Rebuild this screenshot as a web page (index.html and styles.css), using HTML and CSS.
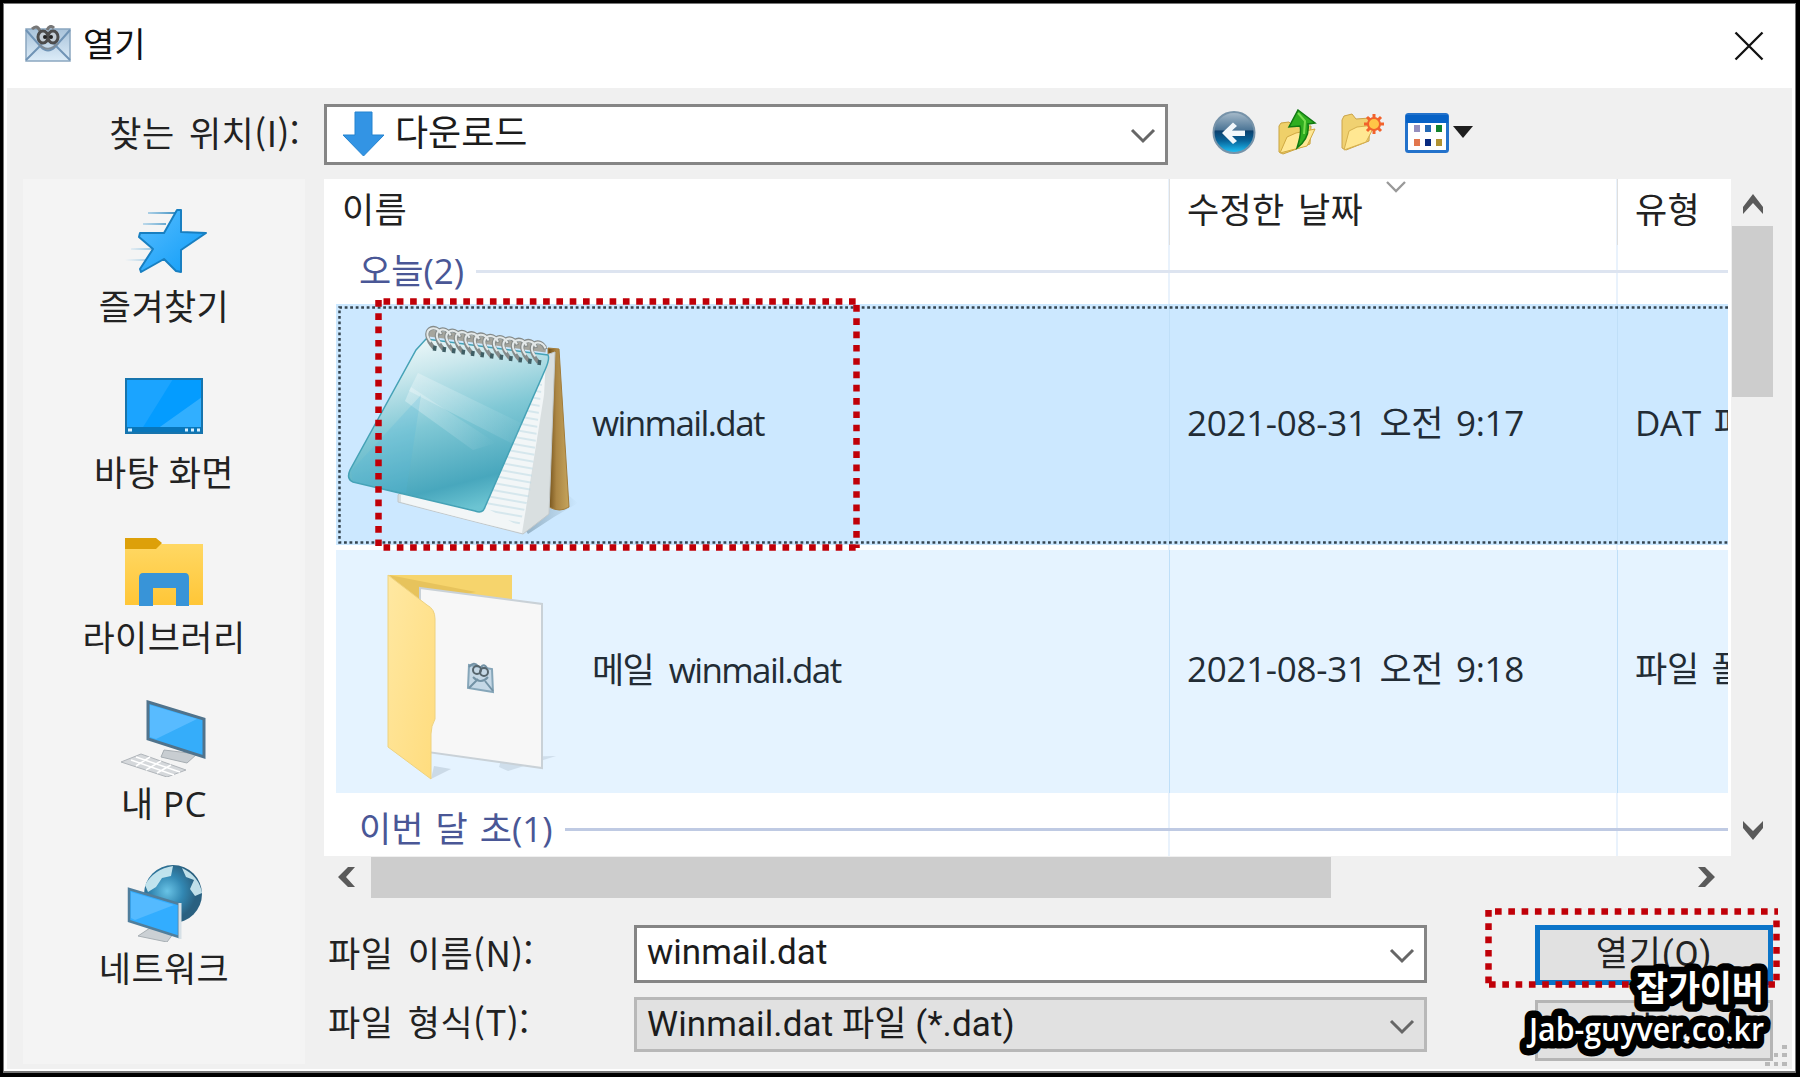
FILE: index.html
```html
<!DOCTYPE html>
<html lang="ko">
<head>
    <meta charset="UTF-8">
    <meta name="viewport" content="width=device-width, initial-scale=1.0">
    <title>열기</title>
    <link rel="stylesheet" href="styles.css">
</head>
<body>
    <div class="dialog">
        <header class="titlebar">
            <svg class="app-icon" width="46" height="38" viewBox="0 0 46 38">
                <defs>
                    <linearGradient id="mail" x1="0" y1="0" x2="0" y2="1">
                        <stop offset="0" stop-color="#a9c3da"/>
                        <stop offset="1" stop-color="#dcecf8"/>
                    </linearGradient>
                </defs>
                <rect x="1" y="4" width="44" height="32" fill="url(#mail)" stroke="#8ba7c0" stroke-width="1.5"/>
                <path d="M1 35 17 19M45 35 29 19M1 5 16 22Q23 29 30 22L45 5" fill="none" stroke="#6f93b5" stroke-width="2"/>
                <path d="M7 4Q12-1 15 6M22 5Q25-1 29 3" fill="none" stroke="#777" stroke-width="3"/>
                <ellipse cx="18" cy="12" rx="5" ry="6" fill="#c3cdd5" stroke="#4c4c4c" stroke-width="3"/>
                <ellipse cx="28" cy="12" rx="5" ry="6" fill="#c3cdd5" stroke="#4c4c4c" stroke-width="3"/>
                <circle cx="20" cy="12" r="2" fill="#222"/><circle cx="26" cy="12" r="2" fill="#222"/>
                <path d="M14 19Q23 29 33 18" fill="none" stroke="#7e8c98" stroke-width="2"/>
            </svg>
            <h1>열기</h1>
            <svg class="close" width="30" height="30" viewBox="0 0 30 30"><path d="M1.500 1.500 28.500 28.500M28.500 1.500 1.500 28.500" stroke="#111" stroke-width="2.300"/></svg>
        </header>

        <div class="content">
            <!-- 위치 선택 -->
            <div class="location">
                <label>찾는 위치(I):</label>
                <div class="combo combo-location">
                    <svg width="43" height="46" viewBox="0 0 43 46"><path d="M13 1H30V24H42L21.500 45 1 24H13Z" fill="#3394e4" stroke="#2583cf"/></svg>
                    <span>다운로드</span>
                    <svg class="chevron" width="26" height="16" viewBox="0 0 26 16"><path d="M2 2 13 13 24 2" fill="none" stroke="#666" stroke-width="3"/></svg>
                </div>
                <div class="tools">
                    <svg class="tool-back" width="44" height="45" viewBox="0 0 44 45">
                        <defs>
                            <linearGradient id="back" x1="0" y1="0" x2="0" y2="1">
                                <stop offset="0" stop-color="#a9bccb"/><stop offset=".44" stop-color="#4c7596"/>
                                <stop offset=".46" stop-color="#0b3f6c"/><stop offset=".7" stop-color="#08649a"/><stop offset="1" stop-color="#20c5fa"/>
                            </linearGradient>
                        </defs>
                        <circle cx="22" cy="22.500" r="20.500" fill="url(#back)" stroke="#7793a9" stroke-width="2"/>
                        <path d="M10 23 21 12.500 25 16 20 20.500H33V26H20L25 31 21 34Z" fill="#f2f7fb"/>
                    </svg>
                    <svg class="tool-up" width="40" height="47" viewBox="0 0 40 47">
                        <path d="M2 17 4 14 12 13 16 17 34 17 33 35 6 45 2 43Z" fill="#efd069" stroke="#c9a340"/>
                        <path d="M3 44 10 28 19 24 38 20 30 37Z" fill="#ffe896" stroke="#d0a942"/>
                        <path d="M21 1 38 14 31 15Q33 29 20 39Q25 23 23 17L12 18Z" fill="#2fae20" stroke="#117a12" stroke-width="1.500"/>
                        <path d="M21 4 28 12 27 25" fill="none" stroke="#79dc50" stroke-width="2"/>
                    </svg>
                    <svg class="tool-new" width="44" height="40" viewBox="0 0 44 40">
                        <path d="M2 7 4 3 12 1 16 6 30 5 29 28 6 37 2 35Z" fill="#f0d171" stroke="#cba44a"/>
                        <path d="M4 37 9 18 17 14 35 12 26 29Z" fill="#ffe792" stroke="#d6b04e"/>
                        <path d="M34 1V21M24 11H44M27 4 41 18M41 4 27 18" stroke="#f2622b" stroke-width="3"/>
                        <circle cx="34" cy="11" r="6" fill="#ffc547" stroke="#f2622b" stroke-width="2"/>
                    </svg>
                    <svg class="tool-views" width="44" height="40" viewBox="0 0 44 40">
                        <rect x="1.500" y="1.500" width="41" height="37" rx="2" fill="#fff" stroke="#2372cb" stroke-width="3"/>
                        <path d="M1 2H43V10H1Z" fill="#0762c6"/>
                        <path d="M9 12h6v7H9Z" fill="#958fbe"/><path d="M20 12h6v7h-6Z" fill="#2469b5"/><path d="M31 12h6v7h-6Z" fill="#12822e"/>
                        <path d="M9 26h6v7H9Z" fill="#e2764d"/><path d="M20 26h6v7h-6Z" fill="#092a80"/><path d="M31 26h6v7h-6Z" fill="#b09232"/>
                    </svg>
                    <svg class="caret" width="20" height="12" viewBox="0 0 20 12"><path d="M0 0H20L10 12Z" fill="#1e1e1e"/></svg>
                </div>
            </div>

            <div class="main">
                <!-- 바로 가기 목록 -->
                <nav class="places">
                    <div class="place">
                        <svg width="88" height="80" viewBox="0 0 88 80">
                            <defs>
                                <linearGradient id="star" x1="0" y1="0" x2="1" y2="1"><stop offset="0" stop-color="#58bdff"/><stop offset="1" stop-color="#0d9cf7"/></linearGradient>
                                <linearGradient id="speed"><stop offset="0" stop-color="#69b5e3" stop-opacity="0"/><stop offset="1" stop-color="#4593c3"/></linearGradient>
                            </defs>
                            <path d="M28 12H55V14H28ZM23 23H46V25H23ZM11 48H34V50H11ZM5 59H28V61H5Z" fill="url(#speed)"/>
                            <path d="M61 10V32L86 33 61 50V72L56 71 44 59 21 72 20 69 33 49 19 37 20 33H44L57 10Z" fill="url(#star)" stroke="#187fc1" stroke-width="2" stroke-linejoin="round"/>
                        </svg>
                        <span>즐겨찾기</span>
                    </div>
                    <div class="place">
                        <svg width="88" height="80" viewBox="0 0 88 80">
                            <path d="M6 13H82V66H6Z" fill="#1ba4ff"/>
                            <path d="M53 13H82V66H20Z" fill="#049cff"/><path d="M82 31V63H37Z" fill="#31afff"/>
                            <path d="M6 61H82V67H6Z" fill="#0876ba"/>
                            <rect x="6" y="13" width="76" height="54" fill="none" stroke="#1674ad" stroke-width="2"/>
                            <path d="M8 64H12M65 64H68M71 64H74M77 64H80" stroke="#d7f0ff" stroke-width="3"/>
                        </svg>
                        <span>바탕 화면</span>
                    </div>
                    <div class="place">
                        <svg width="88" height="80" viewBox="0 -4 88 80">
                            <defs><linearGradient id="lib" x1="0" y1="0" x2="0" y2="1"><stop offset="0" stop-color="#ffd864"/><stop offset="1" stop-color="#ffc637"/></linearGradient></defs>
                            <path d="M5 8H83V70H5Z" fill="url(#lib)"/>
                            <path d="M35 6H83V9H35Z" fill="#f4f4f4"/>
                            <path d="M5 3H36L42 8 36 14H5Z" fill="#dda009"/>
                            <path d="M19 71V43Q19 38 23 38H65Q69 38 69 43V71H56V53H33V71Z" fill="#3894d8"/>
                        </svg>
                        <span>라이브러리</span>
                    </div>
                    <div class="place">
                        <svg width="88" height="80" viewBox="0 0 88 80">
                            <path d="M44 53 77 57 67 66 41 60Z" fill="#c8cdd1" stroke="#a6adb2"/>
                            <path d="M21 57 66 73 47 80 1 65Z" fill="#d5d8db" stroke="#b0b5ba"/>
                            <path d="M16 60 60 75M11 63 54 78M30 60 16 69M41 64 26 73M51 68 37 76" stroke="#fff" stroke-width="1.500"/>
                            <path d="M28 5 84 22V60L28 42Z" fill="#35adfa" stroke="#50738c" stroke-width="3"/>
                            <path d="M30 8 77 22 36 42 30 40Z" fill="#58bbff"/>
                        </svg>
                        <span>내 PC</span>
                    </div>
                    <div class="place">
                        <svg width="88" height="80" viewBox="0 -3 88 80">
                            <defs><radialGradient id="globe" cx=".4" cy=".45"><stop offset="0" stop-color="#69c3e6"/><stop offset=".55" stop-color="#3287b2"/><stop offset="1" stop-color="#296080"/></radialGradient></defs>
                            <circle cx="53" cy="29" r="29" fill="url(#globe)"/>
                            <path d="M25 20Q34 4 53 1L51 11 42 13 36 22 28 27ZM62 3Q79 11 82 28L75 31 70 24 74 15 66 12Z" fill="#d0edf4" opacity=".9"/>
                            <path d="M30 63 53 69 47 77 18 71Z" fill="#cbd0d4" stroke="#a8afb4"/>
                            <path d="M9 24 59 39V72L9 56Z" fill="#32adff" stroke="#507e9c" stroke-width="2.500"/>
                            <path d="M11 27 54 40 15 55 11 53Z" fill="#54baff"/>
                            <path d="M60 38V74" stroke="#d6e0e6" stroke-width="3"/>
                        </svg>
                        <span>네트워크</span>
                    </div>
                </nav>

                <div class="browser">
                    <div class="list-wrap">
                        <!-- 파일 목록 -->
                        <div class="list">
                            <div class="row head">
                                <div class="cell">이름</div>
                                <div class="cell">수정한 날짜
                                    <svg class="sort" width="20" height="12" viewBox="0 0 20 12"><path d="M1 1 10 10 19 1" fill="none" stroke="#999" stroke-width="2.300"/></svg>
                                </div>
                                <div class="cell">유형</div>
                            </div>
                            <div class="group"><span>오늘(2)</span></div>
                            <div class="row file selected">
                                <div class="cell name">
                                    <svg class="file-icon" width="250" height="240" viewBox="0 0 250 240">
                                        <defs>
                                            <linearGradient id="cover" x1=".25" y1="0" x2=".55" y2="1">
                                                <stop offset="0" stop-color="#f1fafb"/><stop offset=".2" stop-color="#cbe8ed"/>
                                                <stop offset=".5" stop-color="#80c8d5"/><stop offset=".85" stop-color="#48a7bd"/><stop offset="1" stop-color="#6cc4d2"/>
                                            </linearGradient>
                                            <linearGradient id="wood"><stop offset="0" stop-color="#6f4d17"/><stop offset=".4" stop-color="#ab8644"/><stop offset="1" stop-color="#c5a45c"/></linearGradient>
                                            <linearGradient id="shadow" x1="0" x2="1"><stop offset="0" stop-color="#7e9caf" stop-opacity=".7"/><stop offset="1" stop-color="#7e9caf" stop-opacity="0"/></linearGradient>
                                            <linearGradient id="ray"><stop offset="0" stop-color="#fff" stop-opacity=".3"/><stop offset="1" stop-color="#fff" stop-opacity="0"/></linearGradient>
                                            <pattern id="lines" width="12" height="7" patternUnits="userSpaceOnUse" patternTransform="rotate(10)"><path d="M0 1H12" stroke="#b9d8e3" stroke-width="1"/></pattern>
                                        </defs>
                                        <path d="M190 226 213 203 232 190 242 198 218 212 192 229Z" fill="url(#shadow)"/>
                                        <path d="M212 43 223 44 233 202Q224 208 213 202Z" fill="url(#wood)" stroke="#a27c3a"/>
                                        <path d="M62 190 210 50 219 47 213 209 187 229Q120 212 62 197Z" fill="#d9dfe0" stroke="#c2c8ca"/>
                                        <path d="M65 190 210 53 208 90 186 228Q120 212 65 197Z" fill="#f2f6f7"/>
                                        <path d="M145 200 207 70 194 188 183 221Z" fill="url(#lines)"/>
                                        <path d="M90 34 212 50Q214 54 209 65L149 202Q147 209 139 206L17 177Q10 174 14 165L80 45Z" fill="url(#cover)" stroke="#45a2b6" stroke-width="1.500"/>
                                        <path d="M82 68 199 125 175 138 73 86Z" fill="url(#ray)"/>
                                        <path d="M75 82 160 138 137 145 69 96Z" fill="url(#ray)"/>
                                        <path d="M85 90 70 188 17 177 15 166Z" fill="#54b7db" opacity=".22"/>
                                        <path d="M93 28 210 44" stroke="#a5a59d" stroke-width="7"/>
                                        <g fill="none" stroke="#858b8a" stroke-width="4"><path id="ring" d="M98 43C81 24 101 16 105 30"/>
                                            <use href="#ring" x="9.500" y="1.300"/><use href="#ring" x="19" y="2.600"/><use href="#ring" x="28.500" y="3.900"/>
                                            <use href="#ring" x="38" y="5.200"/><use href="#ring" x="47.500" y="6.500"/><use href="#ring" x="57" y="7.800"/>
                                            <use href="#ring" x="66.500" y="9.100"/><use href="#ring" x="76" y="10.400"/><use href="#ring" x="85.500" y="11.700"/>
                                            <use href="#ring" x="95" y="13"/><use href="#ring" x="104.500" y="14.300"/>
                                        </g>
                                        <g fill="none" stroke="#e3e8e8" stroke-width="2">
                                            <path id="shine" d="M95 37C84 24 101 18 105 29"/>
                                            <use href="#shine" x="9.500" y="1.300"/><use href="#shine" x="19" y="2.600"/><use href="#shine" x="28.500" y="3.900"/>
                                            <use href="#shine" x="38" y="5.200"/><use href="#shine" x="47.500" y="6.500"/><use href="#shine" x="57" y="7.800"/>
                                            <use href="#shine" x="66.500" y="9.100"/><use href="#shine" x="76" y="10.400"/><use href="#shine" x="85.500" y="11.700"/>
                                            <use href="#shine" x="95" y="13"/><use href="#shine" x="104.500" y="14.300"/>
                                        </g>
                                        <path d="M97 43 207 58" stroke="#3f5e64" stroke-width="5" stroke-dasharray="3.500 6.100"/>
                                    </svg>
                                    <span>winmail.dat</span>
                                </div>
                                <div class="cell">2021-08-31 오전 9:17</div>
                                <div class="cell">DAT 파일</div>
                                <svg class="focus-box" width="1392" height="241"><path d="M1392 3.500H3.500V238.500H1392" fill="none" stroke="#344450" stroke-width="2.500" stroke-dasharray="2.800 2.700"/></svg>
                            </div>
                            <div class="row file hover">
                                <div class="cell name">
                                    <svg class="file-icon" width="250" height="240" viewBox="0 2 250 240">
                                        <defs><linearGradient id="folder" x1="0" y1="0" x2="1" y2="1"><stop offset="0" stop-color="#ffe8a2"/><stop offset="1" stop-color="#ffdc7d"/></linearGradient></defs>
                                        <path d="M163 217 166 207 220 206 172 221Z" fill="#b9cad7" opacity=".5"/>
                                        <path d="M95 229 98 216 115 219 99 227Z" fill="#b9cad7" opacity=".6"/>
                                        <path d="M53 25H176V190H92Z" fill="#f6d46c"/><path d="M53 25 140 42 84 53Z" fill="#e7c35c"/>
                                        <path d="M84 38 206 54V218L84 201Z" fill="#f7f7f7" stroke="#c9d1d7" stroke-width="2"/>
                                        <path d="M52 25 91 55Q99 59 99 69V169Q95 176 95 184V229L52 197Z" fill="url(#folder)" stroke="#eed27f"/>
                                        <path d="M133 115 156 119 157 142 132 138Z" fill="#c5d8e6" stroke="#86a6b9" stroke-width="2"/>
                                        <path d="M133 117Q138 111 142 116M145 117Q148 113 151 118M133 138 142 129M157 141 149 131" fill="none" stroke="#7392a5" stroke-width="2"/>
                                        <circle cx="141" cy="120" r="4" fill="none" stroke="#56656d" stroke-width="2"/><circle cx="148" cy="122" r="4" fill="none" stroke="#56656d" stroke-width="2"/>
                                        <path d="M137 127Q145 135 152 127" fill="none" stroke="#7392a5" stroke-width="2"/>
                                    </svg>
                                    <span>메일 winmail.dat</span>
                                </div>
                                <div class="cell">2021-08-31 오전 9:18</div>
                                <div class="cell">파일 폴더</div>
                            </div>
                            <div class="group group-old"><span>이번 달 초(1)</span></div>
                        </div>

                        <div class="vscroll">
                            <svg width="22" height="22" viewBox="0 0 22 22"><path d="M1 14 11 1 21 14V21L11 10 1 21Z" fill="#5a5a5a"/></svg>
                            <div class="vthumb"></div>
                            <svg class="down" width="22" height="22" viewBox="0 0 22 22"><path d="M1 1 11 11 21 1V8L11 20 1 8Z" fill="#5a5a5a"/></svg>
                        </div>
                    </div>
                    <div class="hscroll">
                        <svg width="18" height="22" viewBox="0 0 18 22"><path d="M11 1H18L9 11 18 21H11L1 11Z" fill="#5a5a5a"/></svg>
                        <div class="hthumb"></div>
                        <svg class="right" width="18" height="22" viewBox="0 0 18 22"><path d="M1 1H8L18 11 8 21H1L10 11Z" fill="#5a5a5a"/></svg>
                    </div>

                    <!-- 파일 이름 / 형식 -->
                    <div class="form">
                        <div class="fields">
                            <label>파일 이름(N):</label>
                            <div class="combo">
                                <span class="file-value">winmail.dat</span>
                                <svg class="chevron" width="26" height="16" viewBox="0 0 26 16"><path d="M2 2 13 13 24 2" fill="none" stroke="#666" stroke-width="3"/></svg>
                            </div>
                            <label class="type-label">파일 형식(T):</label>
                            <div class="combo combo-gray">
                                <span class="type-value">Winmail.dat 파일 (*.dat)</span>
                                <svg class="chevron" width="26" height="16" viewBox="0 0 26 16"><path d="M2 2 13 13 24 2" fill="none" stroke="#666" stroke-width="3"/></svg>
                            </div>
                        </div>
                        <div class="buttons">
                            <button class="open">열기(O)</button>
                            <button>취소</button>
                        </div>
                    </div>
                </div>
            </div>
        </div>
    </div>

    <!-- 강조 표시 -->
    <svg class="mark mark-file" width="486" height="253"><path d="M8.500 3.500H483" /><path d="M3.500 2V250M481.500 7V250M8.500 249.500H483"/></svg>
    <svg class="mark mark-open" width="296" height="81"><path d="M10 3.500H293M3.500 2V76M291.500 12.500V76M4 76.500H293"/></svg>

    <svg class="grip" width="26" height="26" viewBox="0 0 26 26"><path d="M18 2h5v4h-5ZM10 10h4v4h-4ZM18 10h5v4h-5ZM1 19h5v4H1ZM10 19h4v4h-4ZM18 19h5v4h-5Z" fill="#b9b9b9"/></svg>

    <!-- 외곽선을 먼저 그리고 글자를 위에 얹는다 -->
    <svg class="watermark" width="270" height="112" viewBox="0 0 270 112">
        <use class="wm-outline" href="#wm-text"/>
        <g id="wm-text">
            <text class="wm-name" x="126" y="41" textLength="128">잡가이버</text>
            <text class="wm-site" x="19" y="81" textLength="235" lengthAdjust="spacingAndGlyphs">Jab-guyver.co.kr</text>
        </g>
    </svg>
</body>
</html>
```

FILE: styles.css
```css
* {
    box-sizing: border-box;
}

body {
    margin: 0;
    width: 1800px;
    height: 1077px;
    padding: 3px 4px 4px 3px;
    background: #000;
    overflow: hidden;
    position: relative;
    font-family: "Open Sans", "Noto Sans CJK KR", sans-serif;
    font-size: 35px;
    line-height: 40px;
    color: #222;
}

svg {
    display: block;
    flex: none;
}

.dialog {
    width: 1793px;
    height: 1070px;
    background: #fff;
    border: 1px solid #777;
    border-bottom-width: 2px;
    padding: 0 3px 2px;
}

/* 제목 표시줄 */
.titlebar {
    height: 84px;
    display: flex;
    align-items: center;
    padding: 0 28px 0 18px;
}

.titlebar h1 {
    margin: 0 0 4px 12px;
    font-size: 34px;
    font-weight: 400;
    color: #111;
}

.app-icon {
    margin-top: -4px;
}

.close {
    margin-left: auto;
    margin-top: -1px;
}

.content {
    height: 981px;
    background: #f0f0f0;
}

label {
    font-family: "Noto Sans CJK KR", sans-serif;
    font-size: 35px;
    letter-spacing: 0.500px;
    word-spacing: 4px;
    white-space: nowrap;
}

/* 위치 */
.location {
    height: 91px;
    display: flex;
    align-items: center;
}

.location label {
    width: 293px;
    margin-right: 24px;
    padding-bottom: 3px;
    text-align: right;
}

.combo {
    width: 793px;
    height: 58px;
    display: flex;
    align-items: center;
    padding: 0 9px 0 10px;
    background: #fff;
    border: 3px solid #858585;
    font-family: "Roboto", "Noto Sans CJK KR", sans-serif;
    white-space: nowrap;
    color: #1c1c1c;
}

.combo span {
    padding-bottom: 3px;
}

.combo-location {
    width: 844px;
    height: 61px;
    margin-top: 1px;
    padding-left: 15px;
    gap: 10px;
    font-size: 36px;
}

.combo-location span {
    padding-bottom: 1px;
}

.chevron {
    margin-left: auto;
    margin-top: 4px;
}

.tools {
    display: flex;
    align-items: center;
    margin-left: 44px;
    margin-top: -2px;
}

.tool-up {
    margin: 0 23px 0 21px;
}

.tool-views {
    margin: 0 4px 0 21px;
}

.caret {
    margin-top: -2px;
}

/* 왼쪽 바로 가기 */
.main {
    display: flex;
    gap: 19px;
    padding-left: 16px;
}

.places {
    width: 282px;
    height: 885px;
    padding-top: 21px;
    background: #f4f4f4;
}

.place {
    height: 165.500px;
    display: flex;
    flex-direction: column;
    align-items: center;
}

.place span {
    margin-top: 7px;
    letter-spacing: 0.400px;
}

/* 목록 */
.browser {
    width: 1449px;
}

.list-wrap {
    display: flex;
}

.list {
    width: 1407px;
    height: 677px;
    padding: 0 3px 0 12px;
    background:
        linear-gradient(#e9f2fc, #e9f2fc) 844px 0 / 2px 100% no-repeat,
        linear-gradient(#e9f2fc, #e9f2fc) 1292px 0 / 2px 100% no-repeat,
        #fff;
}

.row {
    display: grid;
    grid-template-columns: 833px 448px 111px;
    overflow: hidden;
}

.cell {
    display: flex;
    align-items: center;
    padding-left: 17px;
    white-space: nowrap;
    overflow: hidden;
    position: relative;
    letter-spacing: -0.300px;
    word-spacing: 4px;
    border-left: 1px solid #bfdff8;
}

.cell:first-child {
    border-left: 0;
}

.head {
    height: 66px;
}

.head .cell {
    padding-bottom: 5px;
    letter-spacing: 0.300px;
    border-left-color: #dfdfdf;
}

.head .cell:first-child {
    padding-left: 6px;
}

.sort {
    position: absolute;
    left: 216px;
    top: 2px;
}

.group {
    height: 59px;
    display: flex;
    align-items: center;
    gap: 12px;
    padding-left: 23px;
    padding-bottom: 4px;
    color: #4a5796;
    white-space: nowrap;
    word-spacing: 3px;
}

.group span {
    margin-top: -4px;
}

.group::after {
    content: "";
    flex: 1;
    height: 3px;
    margin-top: -3px;
    background: #dde4f0;
}

.group-old {
    height: 63px;
    padding-bottom: 0;
    padding-top: 12px;
}

.group-old::after {
    background: #bfcae3;
}

.file {
    position: relative;
    height: 241px;
    color: #222c35;
}

.selected {
    background: #cce8ff;
}

.hover {
    height: 243px;
    margin-top: 5px;
    background: #e5f3ff;
}

.file .cell {
    padding-bottom: 4px;
}

.hover .cell {
    padding-bottom: 6px;
}

.file .name {
    padding-left: 0;
    padding-bottom: 0;
    gap: 6px;
    letter-spacing: -1.600px;
    word-spacing: 8px;
}

.name span {
    padding-bottom: 4px;
}

.focus-box {
    position: absolute;
    left: 0;
    top: 0;
}

/* 스크롤바 */
.vscroll {
    width: 42px;
    display: flex;
    flex-direction: column;
    align-items: center;
    padding: 14px 0 14px 1px;
}

.vthumb {
    width: 41px;
    height: 171px;
    margin-top: 11px;
    background: #cdcdcd;
}

.down {
    margin-top: auto;
}

.hscroll {
    width: 1407px;
    height: 42px;
    display: flex;
    align-items: center;
    padding: 0 16px 0 13px;
}

.hthumb {
    width: 960px;
    height: 41px;
    margin-left: 16px;
    background: #cdcdcd;
}

.right {
    margin-left: auto;
}

/* 하단 입력 */
.form {
    display: flex;
    justify-content: space-between;
    padding-top: 27px;
}

.fields {
    display: grid;
    grid-template-columns: 310px 793px;
    row-gap: 14px;
    align-items: center;
    align-content: start;
}

.fields label {
    padding-left: 4px;
    padding-bottom: 4px;
}

.fields .type-label {
    padding-bottom: 8px;
}

.combo-gray {
    height: 55px;
    background: #e1e1e1;
    border-color: #b8b8b8;
}

.combo-gray span {
    padding-bottom: 0;
}

.type-value {
    letter-spacing: 0.100px;
}

.buttons {
    display: flex;
    flex-direction: column;
    gap: 15px;
}

button {
    width: 238px;
    height: 61px;
    padding: 0;
    background: #e1e1e1;
    border: 3px solid #b5b5b5;
    font-family: "Roboto", "Noto Sans CJK KR", sans-serif;
    font-size: 35px;
    line-height: 40px;
    letter-spacing: 0.800px;
    color: #222;
}

.open {
    height: 60px;
    border: 5px solid #0b74c8;
}

.mark {
    position: absolute;
}

.mark path {
    fill: none;
    stroke: #c00008;
    stroke-width: 6.500px;
    stroke-dasharray: 6.650 6.650;
}

.mark-file {
    left: 375px;
    top: 298px;
}

.mark-open {
    left: 1485px;
    top: 908px;
}

.grip {
    position: absolute;
    left: 1764px;
    top: 1043px;
}

/* 워터마크 */
.watermark {
    position: absolute;
    left: 1510px;
    top: 960px;
    fill: #fff;
}

.wm-outline {
    stroke: #000;
    stroke-width: 15px;
    stroke-linejoin: round;
}

.wm-name {
    font-family: "Noto Sans CJK KR", sans-serif;
    font-size: 35px;
    font-weight: 700;
}

.wm-site {
    font-size: 32px;
    font-weight: 600;
}
```
